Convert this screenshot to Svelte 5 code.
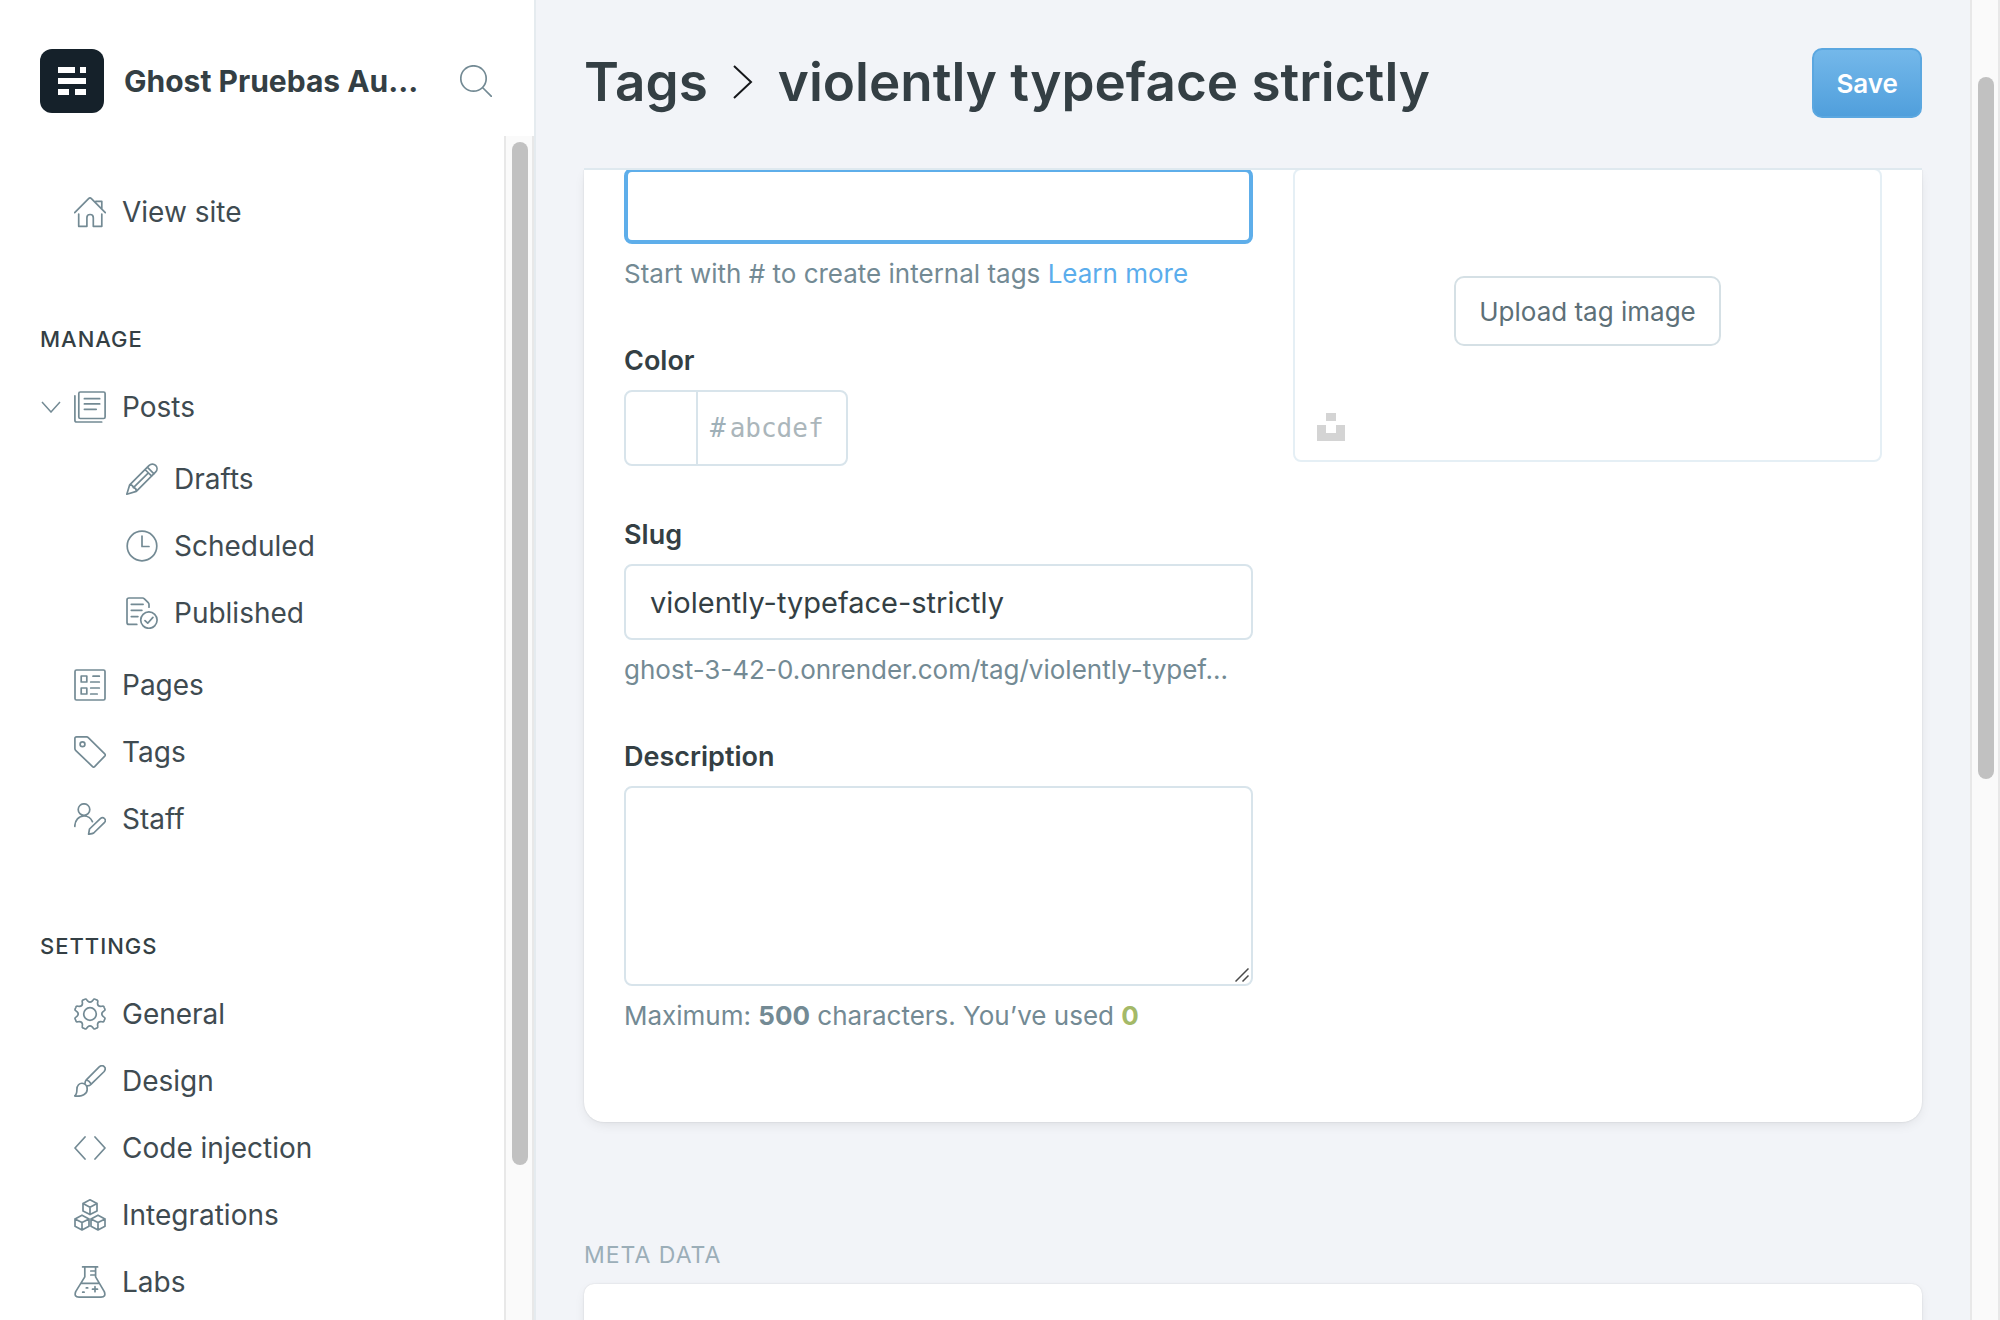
<script lang="ts">
  const circle = (cx: number, cy: number, r: number) =>
    `M${cx - r} ${cy}a${r} ${r} 0 1 0 ${2 * r} 0a${r} ${r} 0 1 0 ${-2 * r} 0`;

  const cube = (cx: number, cy: number) =>
    `M${cx} ${cy - 7.4}l7 3.7v7.4l-7 3.7l-7 -3.7v-7.4zM${cx - 7} ${cy - 3.7}l7 3.7l7 -3.7M${cx} ${cy}v7.4`;

  function gear(): string {
    const at = (deg: number, r: number) => {
      const a = ((deg - 90) * Math.PI) / 180;
      return `${(16 + r * Math.cos(a)).toFixed(2)} ${(16 + r * Math.sin(a)).toFixed(2)}`;
    };
    let d = '';
    for (let k = 0; k < 8; k++) {
      const c = 22.5 + 45 * k;
      d += `${k ? 'L' : 'M'}${at(c - 10, 14.4)}Q${at(c - 8, 16)} ${at(c - 3, 15.6)}L${at(c + 3, 15.6)}Q${at(c + 8, 16)} ${at(c + 10, 14.4)}`;
      d += `L${at(c + 13, 13)}Q${at(c + 22.5, 10.8)} ${at(c + 32, 13)}`;
    }
    return d + 'z' + circle(16, 16, 6.3);
  }

  const icons: Record<string, string> = {
    home: 'M.7 16.7L14.6 2.6q1.4-1.4 2.8 0L31.3 16.7M21.8 5.3h6v7.4M4.7 18v12.3h8.2v-8.6q0-3.2 3.2-3.2t3.2 3.2v8.6h8.5V18',
    posts: 'M6.3 1h23.3q1.5 0 1.5 1.5v23.5q0 1.5-1.5 1.5H6.3q-1.5 0-1.5-1.5V2.5Q4.8 1 6.3 1zM.9 4.8v24.4q0 1.8 1.8 1.8h25M10.4 7.7h15.3M10.4 12.9h15.3M10.4 18.3h11.8',
    pencil: 'M.8 31.2l2.9-9.4L22.9 2.6c4.6-4.6 11.1 2 6.6 6.6L10.3 28.4zM3.7 21.8q3.2-.2 3.7 2.9q3.2.4 2.9 3.7M19 6.5l6.7 6.7M21.3 4.2l6.7 6.7M7.4 24.7L22.4 9.8',
    clock: circle(16, 16, 14.8) + 'M16 6v10.5h7',
    published: 'M10.8 27.4H3q-2 0-2-2V3q0-2 2-2h13.6q1 0 1.8.8l3.8 3.8q.8.8.8 1.8v2.8M5.3 7.3h11.8M5.3 13.3h10.6M5.3 19.6h6.6' + circle(22.9, 23.1, 8.2) + 'M19 23.7l2.7 2.5l5.2-5.8',
    pages: 'M2.5 1h27q1.5 0 1.5 1.5v27q0 1.5-1.5 1.5h-27Q1 31 1 29.5v-27Q1 1 2.5 1zM7.2 7h5.6v6H7.2zM7.2 19h5.6v6H7.2zM19 7.2h6.3M16.7 13h8.6M16.7 19h8.6M16.7 25h6.5',
    tag: 'M2.6.9h10q1 0 1.7.7L31 18.2q.7.8 0 1.6L20.4 30.8q-.8.7-1.6 0L1.6 14.3Q.9 13.6.9 12.6V2.6Q.9.9 2.6.9z' + circle(8.5, 8.2, 2.4),
    staff: circle(10, 6.6, 5.8) + 'M.8 23.5c0-6.500 4-10.500 9.200-10.500c3.900 0 6.800 2 8.400 5.600M14.600 31.200l.9-5.200L26.600 15.300c2.600-2.200 6.300 1.400 4 4L19.700 30q-1 .9-5.100 1.200z',
    gear: gear(),
    brush: 'M12.300 14.800L25.200 1.900c3.800-3.200 7.800.8 5 4.600L17.200 19.200M12.300 14.800q-1.300 1.500-1.300 3.600M17.200 19.200q-1.400 1.600-3.900 1.700M12.300 14.800q3.200 1 4.900 4.400M2.900 24.400c0-8.400 10.400-8 10.300.2c0 4.300-5 7.600-12.600 6.300q2.300-1.600 2.300-6.500z',
    code: 'M11 5L1 16l10 11M21 5l10 11l-10 11',
    cubes: cube(16, 8.2) + cube(8, 23.600) + cube(24, 23.600),
    labs: 'M8.600.900h15M10.800.900v10L1.700 25.600q-2 5.500 3.300 5.500h22q5.300 0 3.300-5.500L21.600 10.900v-10M7 17.300h18M16.800 5h4.800M16.800 9h4.800M21 20.700v5M18.500 23.200h5M12.300 21.900h1.400M8.700 26.200h1.400',
    chevron: 'M1 1l9 10l9-10'
  };

  const manage = [
    {
      label: 'Posts', icon: 'posts',
      children: [
        { label: 'Drafts', icon: 'pencil' },
        { label: 'Scheduled', icon: 'clock' },
        { label: 'Published', icon: 'published' }
      ]
    },
    { label: 'Pages', icon: 'pages' },
    { label: 'Tags', icon: 'tag' },
    { label: 'Staff', icon: 'staff' }
  ];
  const settings = [
    { label: 'General', icon: 'gear' },
    { label: 'Design', icon: 'brush' },
    { label: 'Code injection', icon: 'code' },
    { label: 'Integrations', icon: 'cubes' },
    { label: 'Labs', icon: 'labs' }
  ];

  let name = $state('');
  let color = $state('');
  let slug = $state('violently-typeface-strictly');
  let description = $state('');
</script>

{#snippet glyph(id)}
  <svg class="icon" viewBox="0 0 32 32" aria-hidden="true"><path d={icons[id]} /></svg>
{/snippet}

<div class="app">
  <aside class="sidebar">
    <header class="brand">
      <svg class="logo" viewBox="0 0 64 64" aria-hidden="true">
        <rect width="64" height="64" rx="12" fill="#15212a" />
        <path fill="#fff" d="M18 18h17v6H18zM40 18h6v6h-6zM18 29h28v6H18zM18 40h11v6H18zM35 40h11v6H35z" />
      </svg>
      <span class="site">Ghost Pruebas Au...</span>
      <button class="search" aria-label="Search">
        <svg class="icon" viewBox="0 0 32 32" aria-hidden="true"><path d={circle(13.5, 13.5, 12.7) + 'M22.500 22.500l9 9'} /></svg>
      </button>
    </header>
    <div class="scroller">
      <nav class="nav">
        <a class="row" href="#site">{@render glyph('home')}View site</a>
        <h2>Manage</h2>
        {#each manage as item}
          <div class="entry">
            {#if item.children}
              <button class="toggle" aria-label="Collapse posts">
                <svg viewBox="0 0 20 12" aria-hidden="true"><path d={icons.chevron} /></svg>
              </button>
            {/if}
            <a class="row" href="#{item.icon}">{@render glyph(item.icon)}{item.label}</a>
          </div>
          {#if item.children}
            <div class="sub">
              {#each item.children as child}
                <a class="row" href="#{child.icon}">{@render glyph(child.icon)}{child.label}</a>
              {/each}
            </div>
          {/if}
        {/each}
        <h2>Settings</h2>
        {#each settings as item}
          <a class="row" href="#{item.icon}">{@render glyph(item.icon)}{item.label}</a>
        {/each}
      </nav>
      <div class="track side-track"><div class="thumb"></div></div>
    </div>
  </aside>

  <main class="main">
    <header class="top">
      <h1>
        <a href="#tags">Tags</a>
        <svg class="sep" viewBox="0 0 20 34" aria-hidden="true"><path d="M1 1l17 16L1 33" /></svg>
        <span>violently typeface strictly</span>
      </h1>
      <button class="save">Save</button>
    </header>
    <div class="content">
      <section class="card">
        <div class="fields">
          <div class="field">
            <input class="box focused" aria-label="Name" bind:value={name} />
            <p>Start with # to create internal tags <a href="#learn">Learn more</a></p>
          </div>
          <div class="field">
            <label for="color">Color</label>
            <div class="color">
              <span class="swatch"></span>
              <span class="hash">#</span>
              <input id="color" placeholder="abcdef" bind:value={color} />
            </div>
          </div>
          <div class="field">
            <label for="slug">Slug</label>
            <input class="box" id="slug" bind:value={slug} />
            <p>ghost-3-42-0.onrender.com/tag/violently-typef...</p>
          </div>
          <div class="field">
            <label for="description">Description</label>
            <div class="area">
              <textarea class="box" id="description" bind:value={description}></textarea>
              <svg class="grip" viewBox="0 0 14 14" aria-hidden="true"><path d="M.5 13.500l13-13M7.500 13.500l6-6" /></svg>
            </div>
            <p>Maximum: <b>500</b> characters. You’ve used <b class="count">{description.length}</b></p>
          </div>
        </div>
        <div class="upload">
          <button class="pick">Upload tag image</button>
          <button class="unsplash" aria-label="Unsplash">
            <svg viewBox="0 0 28 28" aria-hidden="true"><path d="M9 0h10v8H9zM0 12h9v8h10v-8h9v16H0z" /></svg>
          </button>
        </div>
      </section>
      <h3>Meta Data</h3>
      <section class="card meta"></section>
    </div>
  </main>
  <div class="track page-track"><div class="thumb"></div></div>
</div>

<style>
  :global(body) {
    margin: 0;
    background: #f2f4f8;
  }
  .app {
    display: flex;
    height: 100vh;
    overflow: hidden;
    font-family: Inter, 'Open Sans', sans-serif;
    font-size: 26px;
    color: #343f44;
  }
  .app * {
    box-sizing: border-box;
  }
  button,
  input,
  textarea {
    font: inherit;
    color: inherit;
  }
  button {
    padding: 0;
    border: 0;
    background: none;
  }
  a {
    color: inherit;
    text-decoration: none;
  }
  h1,
  h2,
  h3,
  p {
    margin: 0;
  }
  svg {
    display: block;
    flex: none;
  }
  .icon {
    width: 32px;
    height: 32px;
    fill: none;
    stroke: #738a94;
    stroke-width: 1.7;
    stroke-linecap: round;
    stroke-linejoin: round;
  }

  .sidebar {
    display: flex;
    flex: none;
    flex-direction: column;
    width: 536px;
    background: #fff;
    border-right: 2px solid #e5ebef;
  }
  .brand {
    display: flex;
    flex: none;
    align-items: center;
    height: 136px;
    padding: 26px 42px 0 40px;
  }
  .logo {
    width: 64px;
    height: 64px;
  }
  .site {
    flex: 1;
    min-width: 0;
    margin-left: 20px;
    font-size: 30px;
    font-weight: 700;
    line-height: 40px;
    white-space: nowrap;
  }
  .scroller {
    display: flex;
    flex: 1;
    min-height: 0;
  }
  .nav {
    flex: 1;
    padding-top: 42px;
    overflow: hidden;
  }
  .row {
    display: flex;
    align-items: center;
    gap: 16px;
    height: 67px;
    padding-left: 74px;
    font-size: 28px;
    color: #3f4b51;
  }
  .entry {
    display: grid;
  }
  .entry > * {
    grid-area: 1 / 1;
  }
  .toggle {
    z-index: 1;
    justify-self: start;
    align-self: center;
    margin-left: 41px;
  }
  .toggle svg {
    width: 20px;
    height: 12px;
    fill: none;
    stroke: #738a94;
    stroke-width: 1.5;
  }
  .sub {
    padding: 5px 0;
  }
  .sub .row {
    padding-left: 126px;
  }
  h2 {
    margin-top: 60px;
    padding-left: 40px;
    font-size: 22px;
    font-weight: 500;
    line-height: 68px;
    letter-spacing: 1px;
    text-transform: uppercase;
  }
  .track {
    flex: none;
    width: 30px;
    padding-left: 6px;
    background: #fafafa;
    border: solid #e8e8e8;
    border-width: 0 2px;
  }
  .thumb {
    width: 16px;
    background: #c1c1c1;
    border-radius: 8px;
  }
  .side-track {
    padding-top: 6px;
  }
  .side-track .thumb {
    height: 86.8%;
  }
  .page-track {
    padding-top: 77px;
  }
  .page-track .thumb {
    height: 56.5%;
  }

  .main {
    display: flex;
    flex: 1;
    flex-direction: column;
    min-width: 0;
    padding: 0 48px;
    background: #f2f4f8;
  }
  .top {
    display: flex;
    flex: none;
    align-items: center;
    justify-content: space-between;
    height: 170px;
    padding-bottom: 2px;
    border-bottom: 2px solid #dfe9ef;
  }
  h1 {
    display: flex;
    align-items: center;
    gap: 25px;
    padding-bottom: 2px;
    font-size: 53px;
    font-weight: 600;
    line-height: 68px;
  }
  .sep {
    width: 20px;
    height: 34px;
    fill: none;
    stroke: #15171a;
    stroke-width: 2;
  }
  .save {
    height: 70px;
    padding: 0 22px;
    font-weight: 600;
    color: #fff;
    background: linear-gradient(#74b8ea, #509fdc);
    border: 2px solid #5ba7e0;
    border-radius: 10px;
  }
  .content {
    flex: 1;
    min-height: 0;
    margin: 0 -48px;
    padding: 0 48px;
    overflow: hidden;
  }
  .card {
    display: grid;
    grid-template-columns: 1.068fr 1fr;
    align-items: start;
    gap: 40px;
    margin-top: -2px;
    padding: 0 40px 88px;
    background: #fff;
    border-radius: 0 0 20px 20px;
    box-shadow: 0 0 2px rgba(0, 0, 0, 0.12), 0 4px 14px -4px rgba(0, 0, 0, 0.12);
  }
  .fields {
    display: grid;
    gap: 52px;
    min-width: 0;
  }
  .field {
    display: grid;
    gap: 12px;
    min-width: 0;
  }
  label {
    font-size: 27px;
    font-weight: 600;
    line-height: 34px;
  }
  p {
    line-height: 36px;
    color: #738a94;
  }
  p a {
    color: #5badec;
  }
  .count {
    color: #a4b968;
  }
  .box {
    width: 100%;
    height: 76px;
    padding: 0 24px;
    font-size: 29px;
    background: #fff;
    border: 2px solid #d8e4eb;
    border-radius: 8px;
    outline: none;
  }
  .focused {
    border: 4px solid #5eaeea;
  }
  .area {
    position: relative;
  }
  textarea.box {
    display: block;
    height: 200px;
    resize: none;
  }
  .grip {
    position: absolute;
    right: 4px;
    bottom: 4px;
    width: 14px;
    height: 14px;
    stroke: #4a4a4a;
    stroke-width: 1.5;
  }
  .color {
    display: flex;
    align-items: center;
    width: 224px;
    height: 76px;
    font-family: 'DejaVu Sans Mono', monospace;
    color: #9fb0b8;
    border: 2px solid #d8e4eb;
    border-radius: 8px;
  }
  .swatch {
    width: 72px;
    height: 100%;
    border-right: 2px solid #d8e4eb;
  }
  .hash {
    padding: 0 4px 0 12px;
  }
  .color input {
    flex: 1;
    min-width: 0;
    height: 100%;
    padding: 0;
    background: none;
    border: 0;
    outline: none;
  }
  .color input::placeholder {
    color: #abb6bb;
    opacity: 1;
  }
  .upload {
    display: grid;
    place-items: center;
    height: 294px;
    padding-bottom: 8px;
    border: 2px solid #e5eff5;
    border-radius: 8px;
  }
  .upload > * {
    grid-area: 1 / 1;
  }
  .pick {
    height: 70px;
    padding: 0 23px;
    color: #5d7078;
    border: 2px solid #d5e0e5;
    border-radius: 10px;
  }
  .unsplash {
    place-self: end start;
    margin: 0 0 11px 22px;
  }
  .unsplash svg {
    width: 28px;
    height: 28px;
    fill: #d4d4d4;
  }
  h3 {
    margin: 118px 0 14px;
    font-size: 23px;
    font-weight: 400;
    line-height: 30px;
    letter-spacing: 1px;
    text-transform: uppercase;
    color: #9baeb8;
  }
  .meta {
    height: 400px;
    margin: 0;
    border-radius: 10px;
  }
</style>
